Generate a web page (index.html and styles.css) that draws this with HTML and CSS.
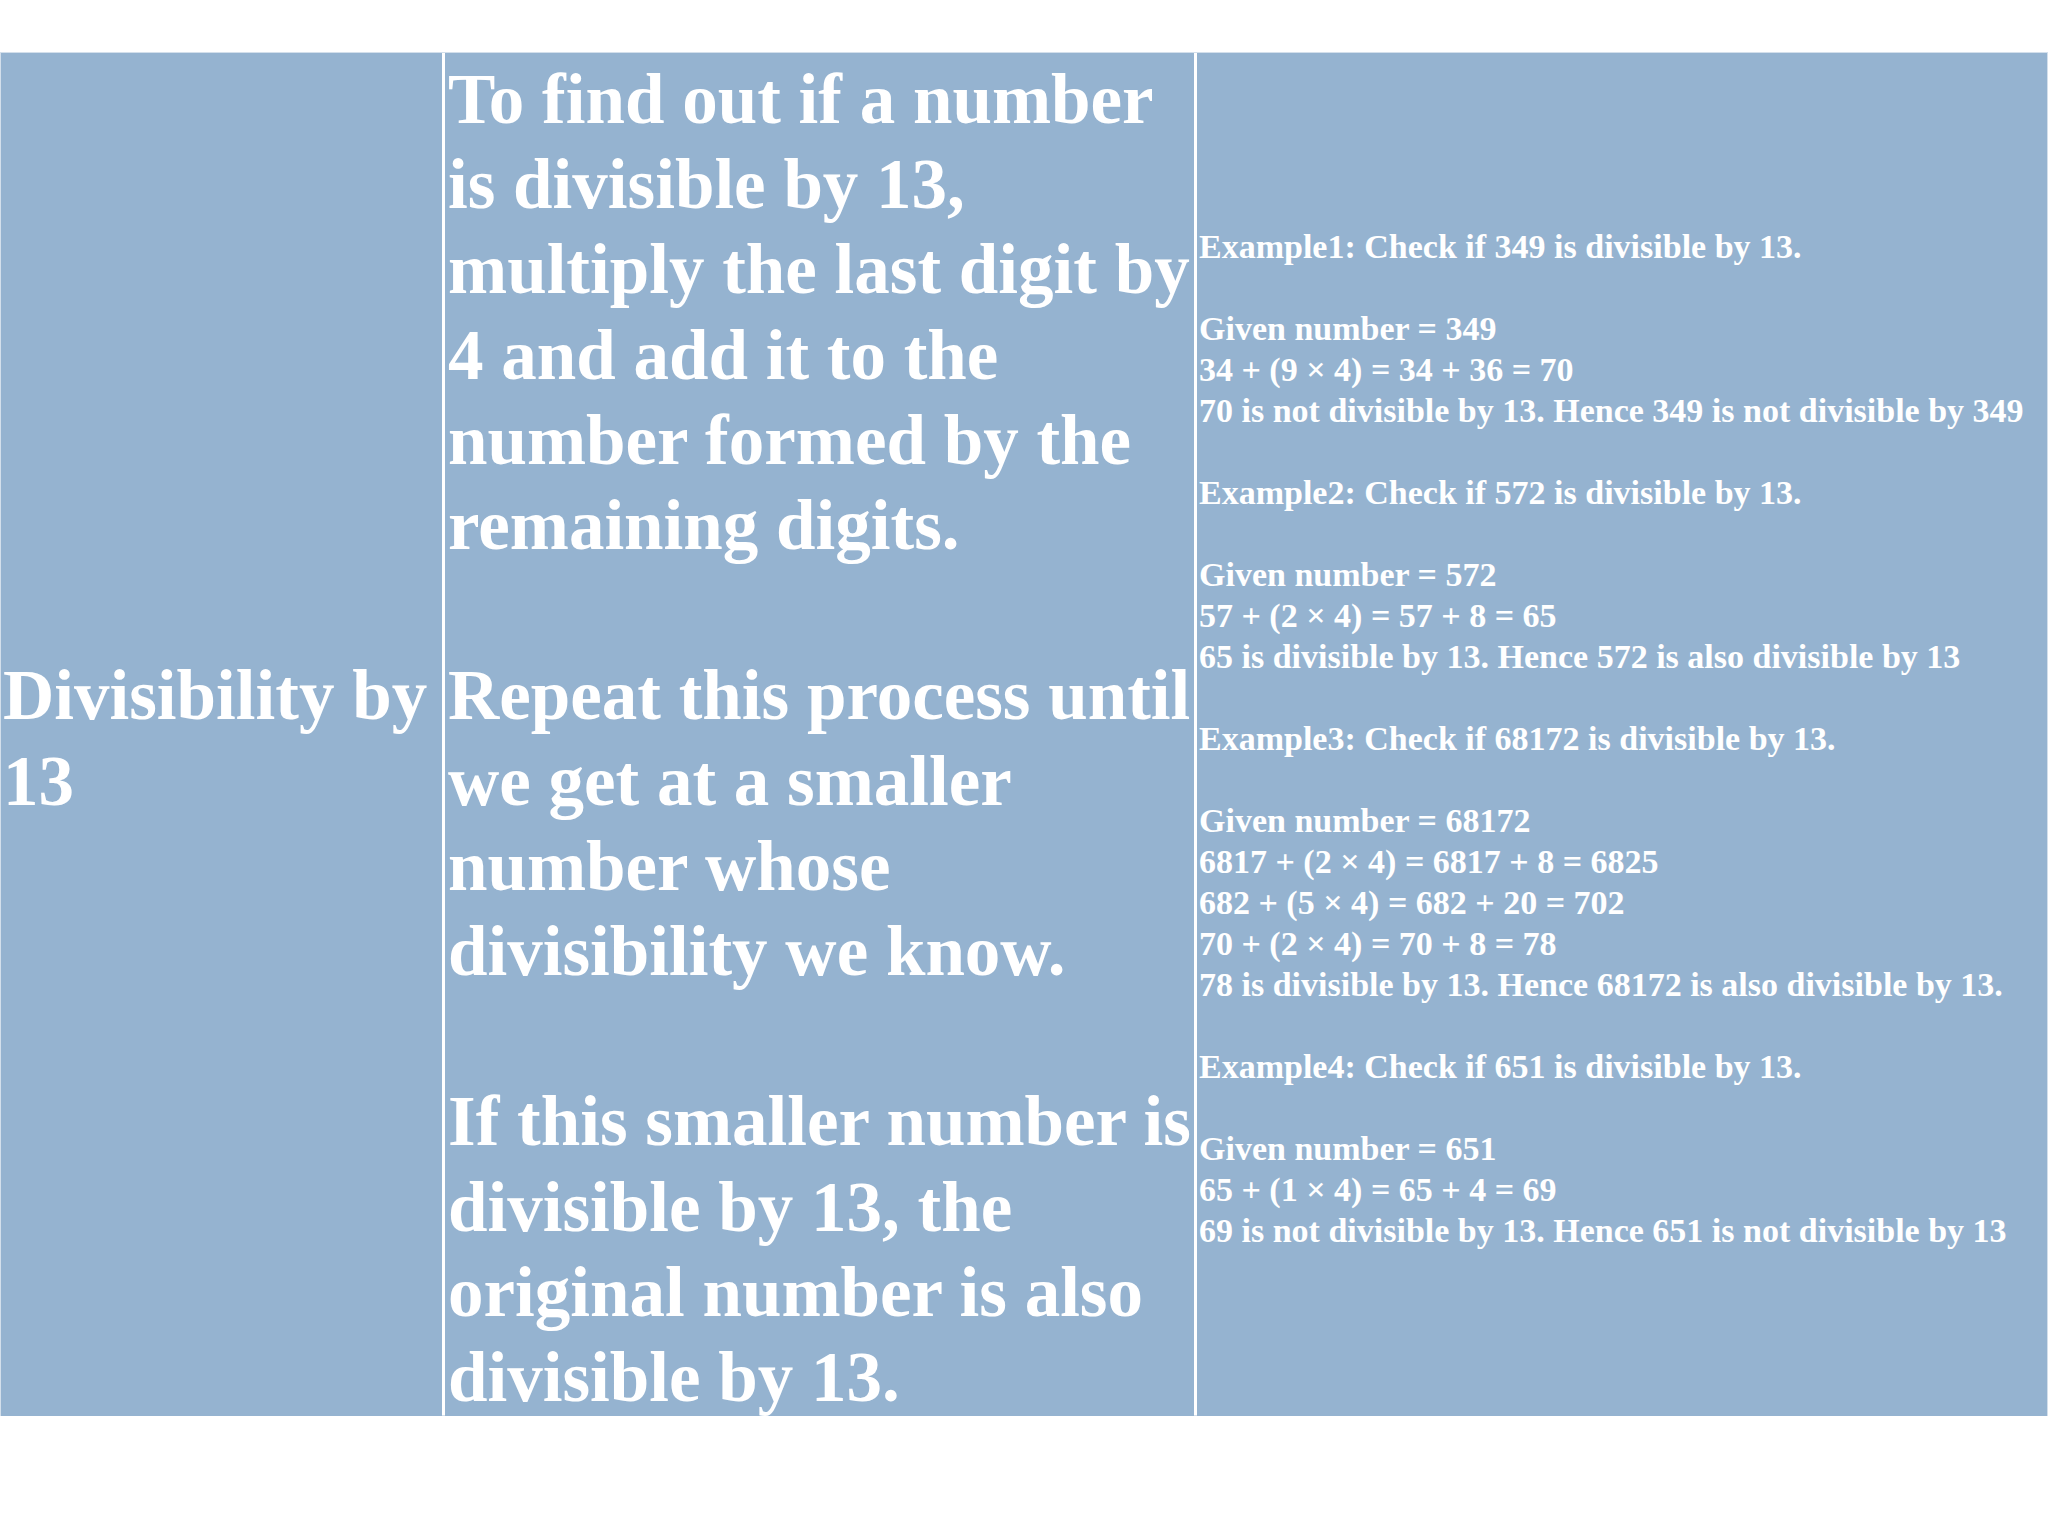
FILE: index.html
```html
<!DOCTYPE html>
<html>
<head>
<meta charset="utf-8">
<link rel="stylesheet" href="styles.css">
</head>
<body>
<div class="table">
  <div class="cell title">
    <div class="big">Divisibility by<br>13</div>
  </div>
  <div class="cell rule">
    <div class="big">
      <span class="ln">To find out if a number</span>
      <span class="ln">is divisible by 13,</span>
      <span class="ln">multiply the last digit by</span>
      <span class="ln">4 and add it to the</span>
      <span class="ln">number formed by the</span>
      <span class="ln">remaining digits.</span>
      <span class="ln">&nbsp;</span>
      <span class="ln">Repeat this process until</span>
      <span class="ln">we get at a smaller</span>
      <span class="ln">number whose</span>
      <span class="ln">divisibility we know.</span>
      <span class="ln">&nbsp;</span>
      <span class="ln">If this smaller number is</span>
      <span class="ln">divisible by 13, the</span>
      <span class="ln">original number is also</span>
      <span class="ln">divisible by 13.</span>
    </div>
  </div>
  <div class="cell examples">
    <div class="small">
      <span class="ln">Example1: Check if 349 is divisible by 13.</span>
      <span class="ln">&nbsp;</span>
      <span class="ln">Given number = 349</span>
      <span class="ln">34 + (9 × 4) = 34 + 36 = 70</span>
      <span class="ln">70 is not divisible by 13. Hence 349 is not divisible by 349</span>
      <span class="ln">&nbsp;</span>
      <span class="ln">Example2: Check if 572 is divisible by 13.</span>
      <span class="ln">&nbsp;</span>
      <span class="ln">Given number = 572</span>
      <span class="ln">57 + (2 × 4) = 57 + 8 = 65</span>
      <span class="ln">65 is divisible by 13. Hence 572 is also divisible by 13</span>
      <span class="ln">&nbsp;</span>
      <span class="ln">Example3: Check if 68172 is divisible by 13.</span>
      <span class="ln">&nbsp;</span>
      <span class="ln">Given number = 68172</span>
      <span class="ln">6817 + (2 × 4) = 6817 + 8 = 6825</span>
      <span class="ln">682 + (5 × 4) = 682 + 20 = 702</span>
      <span class="ln">70 + (2 × 4) = 70 + 8 = 78</span>
      <span class="ln">78 is divisible by 13. Hence 68172 is also divisible by 13.</span>
      <span class="ln">&nbsp;</span>
      <span class="ln">Example4: Check if 651 is divisible by 13.</span>
      <span class="ln">&nbsp;</span>
      <span class="ln">Given number = 651</span>
      <span class="ln">65 + (1 × 4) = 65 + 4 = 69</span>
      <span class="ln">69 is not divisible by 13. Hence 651 is not divisible by 13</span>
    </div>
  </div>
</div>
</body>
</html>
```

FILE: styles.css
```css
html, body {
  margin: 0;
  padding: 0;
  background: #ffffff;
}

body {
  font-family: "Liberation Serif", "Times New Roman", serif;
  font-weight: bold;
  color: #ffffff;
}

.table {
  display: grid;
  grid-template-columns: 441px 749px 1fr;
  column-gap: 3px;
  margin-top: 52px;
  height: 1364px;
  background: #ffffff;
  border: 1px solid #d3dfeb;
  box-sizing: border-box;
}

.cell {
  background: #95b3d0;
  display: flex;
  flex-direction: column;
  justify-content: center;
  overflow: visible;
  min-width: 0;
  padding-top: 4px;
  box-sizing: border-box;
}

.title {
  padding-left: 2px;
}

.rule {
  padding-left: 3px;
}

.examples {
  padding-left: 2px;
}

.big {
  font-size: 71px;
  line-height: 85.2px;
  white-space: nowrap;
}

.small {
  font-size: 34px;
  line-height: 41px;
  white-space: nowrap;
}

.ln {
  display: block;
}
```
